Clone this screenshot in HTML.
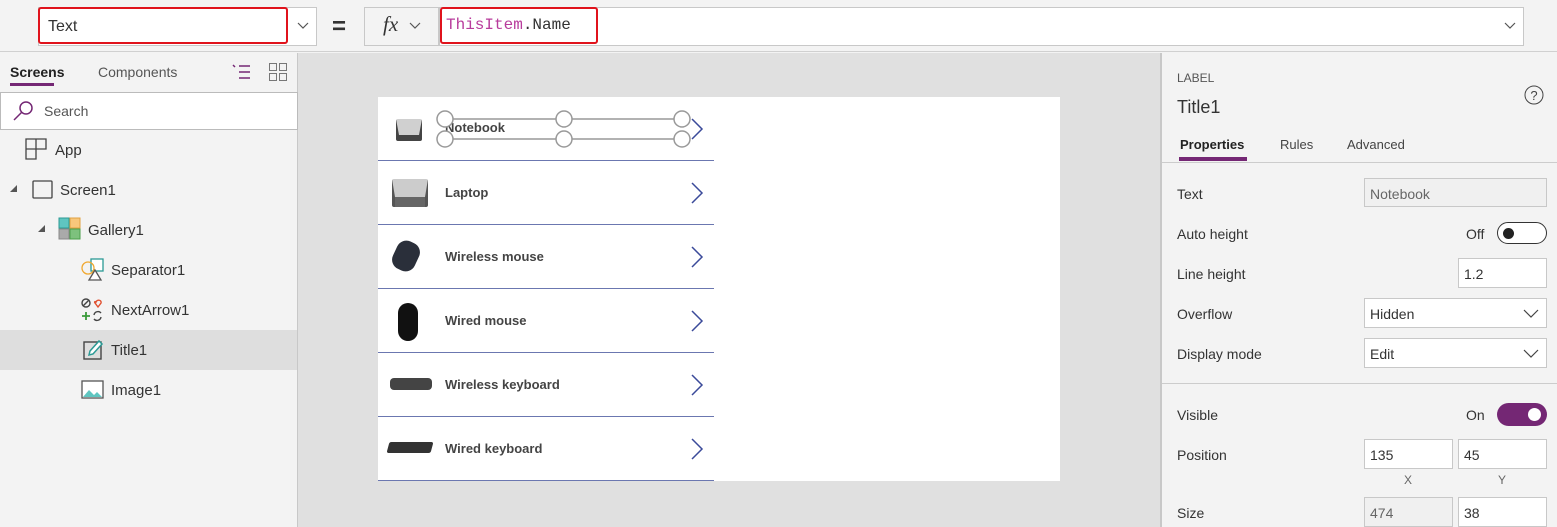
<!DOCTYPE html>
<html><head><meta charset="utf-8"><style>
*{box-sizing:border-box;margin:0;padding:0}
body{width:1557px;height:527px;overflow:hidden;background:#f3f3f3;font-family:"Liberation Sans",sans-serif;color:#333;position:relative;font-size:14px}
.a{position:absolute}
.box{position:absolute;background:#fff;border:1px solid #c8c8c8}
.t{position:absolute;font-size:14px;color:#333;white-space:nowrap}
.row{position:absolute;left:378px;width:336px;height:64px;border-bottom:1px solid #6b77b0}
.row .n{position:absolute;left:67px;top:24px;font-size:13px;font-weight:bold;color:#444}
.row svg.ch{position:absolute;left:312px;top:20px}
.img{position:absolute;left:12px;background:#333;border-radius:2px}
.tree{position:absolute;left:0;width:297px;height:40px;font-size:15px}
.tree span{position:absolute;top:11px}
</style></head><body>
<!-- top bar -->
<div class="a" style="left:0;top:0;width:1557px;height:52px;background:#f3f3f3;border-bottom:1px solid #d0d0d0"></div>
<div class="box" style="left:38px;top:7px;width:279px;height:39px"></div>
<div class="a" style="left:38px;top:7px;width:250px;height:37px;border:2px solid #e0131c;border-radius:3px;background:#fff"></div>
<div class="t" style="left:48px;top:18px;font-size:16px">Text</div>
<svg class="a" style="left:296px;top:21px" width="14" height="10"><path d="M2 2l5 5 5-5" fill="none" stroke="#555" stroke-width="1.2"/></svg>
<div class="t" style="left:332px;top:13px;font-size:24px;font-weight:bold">=</div>
<div class="box" style="left:364px;top:7px;width:75px;height:39px;background:#f3f3f3"></div>
<div class="t" style="left:383px;top:12px;font-family:'Liberation Serif',serif;font-style:italic;font-size:21px">fx</div>
<svg class="a" style="left:408px;top:21px" width="14" height="10"><path d="M2 2l5 5 5-5" fill="none" stroke="#555" stroke-width="1.2"/></svg>
<div class="box" style="left:439px;top:7px;width:1085px;height:39px"></div>
<div class="a" style="left:440px;top:7px;width:158px;height:37px;border:2px solid #e0131c;border-radius:3px;background:#fff"></div>
<div class="t" style="left:446px;top:16px;font-family:'Liberation Mono',monospace;font-size:16px"><span style="color:#b83c9c">ThisItem</span>.Name</div>
<svg class="a" style="left:1503px;top:21px" width="14" height="10"><path d="M2 2l5 5 5-5" fill="none" stroke="#555" stroke-width="1.2"/></svg>

<!-- left panel -->
<div class="a" style="left:0;top:53px;width:298px;height:474px;border-right:1px solid #c8c8c8"></div>
<div class="t" style="left:10px;top:64px;font-weight:bold;font-size:14px;color:#222">Screens</div>
<div class="a" style="left:10px;top:83px;width:44px;height:3px;background:#742774"></div>
<div class="t" style="left:98px;top:64px;color:#555">Components</div>
<svg class="a" style="left:230px;top:62px" width="22" height="20"><path d="M3 3l2 2M9 4h11M9 10h11M9 16h11" stroke="#742774" stroke-width="1.5" fill="none"/></svg>
<svg class="a" style="left:268px;top:62px" width="20" height="20"><g fill="none" stroke="#777"><rect x="1.5" y="1.5" width="7" height="7"/><rect x="11.5" y="1.5" width="7" height="7"/><rect x="1.5" y="11.5" width="7" height="7"/><rect x="11.5" y="11.5" width="7" height="7"/></g></svg>
<div class="box" style="left:0;top:92px;width:298px;height:38px;border-color:#bbb"></div>
<svg class="a" style="left:11px;top:99px" width="26" height="24"><circle cx="15" cy="9" r="6" fill="none" stroke="#742774" stroke-width="1.5"/><path d="M11 13l-8 8" stroke="#742774" stroke-width="1.5"/></svg>
<div class="t" style="left:44px;top:103px;color:#555">Search</div>

<div class="tree" style="top:130px"><svg class="a" style="left:25px;top:8px" width="24" height="24"><path d="M1 1h10v10H1zM11 1h10v10H11M1 11v10h10V11" fill="none" stroke="#444" stroke-width="1.3"/></svg><span style="left:55px;top:12px">App</span></div>
<div class="tree" style="top:170px"><svg class="a" style="left:10px;top:15px" width="8" height="8"><path d="M7 0v7H0z" fill="#555"/></svg><svg class="a" style="left:32px;top:10px" width="22" height="20"><rect x="1" y="1" width="19" height="17" rx="1" fill="none" stroke="#444" stroke-width="1.3"/></svg><span style="left:60px;top:12px">Screen1</span></div>
<div class="tree" style="top:210px"><svg class="a" style="left:38px;top:15px" width="8" height="8"><path d="M7 0v7H0z" fill="#555"/></svg><svg class="a" style="left:58px;top:7px" width="24" height="24"><rect x="1" y="1" width="10" height="10" fill="#5fc5c0" stroke="#2b9a95"/><rect x="12" y="1" width="10" height="10" fill="#f8c77b" stroke="#e0a040"/><rect x="1" y="12" width="10" height="10" fill="#aaa" stroke="#888"/><rect x="12" y="12" width="10" height="10" fill="#7dc17d" stroke="#4a9f4a"/></svg><span style="left:88px;top:12px">Gallery1</span></div>
<div class="tree" style="top:250px"><svg class="a" style="left:81px;top:8px" width="24" height="24"><rect x="10" y="1" width="12" height="12" fill="#fff" stroke="#2b9a95" stroke-width="1.3"/><circle cx="7" cy="10" r="6" fill="none" stroke="#f0a830" stroke-width="1.3"/><path d="M8 22l6-10 6 10z" fill="#fff" stroke="#555" stroke-width="1.3"/></svg><span style="left:111px;top:12px">Separator1</span></div>
<div class="tree" style="top:290px"><svg class="a" style="left:81px;top:8px" width="24" height="24"><circle cx="5" cy="5" r="4" fill="none" stroke="#444" stroke-width="1.4"/><path d="M2 8l6-6" stroke="#444" stroke-width="1.4"/><path d="M15 4c1-3 6-2 5 1l-3 4-3-4c-1-1 0-2 1-1z" fill="none" stroke="#e05030" stroke-width="1.4"/><path d="M1 18h8M5 14v8" stroke="#3a9a3a" stroke-width="1.8"/><path d="M13 17a4 4 0 0 1 7-2M20 19a4 4 0 0 1-7 2" fill="none" stroke="#444" stroke-width="1.4"/></svg><span style="left:111px;top:12px">NextArrow1</span></div>
<div class="tree" style="top:330px;background:#dedede"><svg class="a" style="left:83px;top:8px" width="22" height="24"><rect x="1" y="4" width="17" height="17" fill="none" stroke="#444" stroke-width="1.4"/><path d="M6 17l1-4 9-10 3 3-9 10z" fill="#fff" stroke="#2b9a95" stroke-width="1.5"/></svg><span style="left:111px;top:12px">Title1</span></div>
<div class="tree" style="top:370px"><svg class="a" style="left:81px;top:10px" width="24" height="20"><rect x="1" y="1" width="21" height="17" fill="#fff" stroke="#555" stroke-width="1.3"/><path d="M2 17l6-7 5 5 3-3 5 5z" fill="#5fc5c0"/></svg><span style="left:111px;top:12px">Image1</span></div>

<!-- canvas -->
<div class="a" style="left:298px;top:53px;width:862px;height:474px;background:#e0e0e0"></div>
<div class="a" style="left:378px;top:97px;width:682px;height:384px;background:#fff"></div>
<div class="row" style="top:97px"><div class="img" style="left:18px;top:22px;width:26px;height:22px;background:#444;border-top:16px solid #d0d0d0;border-left:3px solid #444;border-right:3px solid #444"></div><div class="n" style="top:23px">Notebook</div><svg class="ch" width="14" height="24"><path d="M2 2l10 10-10 10" fill="none" stroke="#3b4a9a" stroke-width="1.5"/></svg></div>
<div class="row" style="top:161px"><div class="img" style="left:14px;top:18px;width:36px;height:28px;background:#666;border-top:18px solid #ccc;border-left:3px solid #555;border-right:3px solid #555"></div><div class="n">Laptop</div><svg class="ch" width="14" height="24"><path d="M2 2l10 10-10 10" fill="none" stroke="#3b4a9a" stroke-width="1.5"/></svg></div>
<div class="row" style="top:225px"><div class="img" style="left:16px;top:16px;width:24px;height:30px;border-radius:10px;transform:rotate(25deg);background:#2a2f3a"></div><div class="n">Wireless mouse</div><svg class="ch" width="14" height="24"><path d="M2 2l10 10-10 10" fill="none" stroke="#3b4a9a" stroke-width="1.5"/></svg></div>
<div class="row" style="top:289px"><div class="img" style="left:20px;top:14px;width:20px;height:38px;border-radius:10px;background:#111"></div><div class="n">Wired mouse</div><svg class="ch" width="14" height="24"><path d="M2 2l10 10-10 10" fill="none" stroke="#3b4a9a" stroke-width="1.5"/></svg></div>
<div class="row" style="top:353px"><div class="img" style="top:25px;width:42px;height:12px;border-radius:4px;background:#444"></div><div class="n">Wireless keyboard</div><svg class="ch" width="14" height="24"><path d="M2 2l10 10-10 10" fill="none" stroke="#3b4a9a" stroke-width="1.5"/></svg></div>
<div class="row" style="top:417px"><div class="img" style="left:10px;top:25px;width:44px;height:11px;background:#333;transform:skewX(-15deg)"></div><div class="n">Wired keyboard</div><svg class="ch" width="14" height="24"><path d="M2 2l10 10-10 10" fill="none" stroke="#3b4a9a" stroke-width="1.5"/></svg></div>
<!-- selection handles -->
<svg class="a" style="left:434px;top:108px" width="260" height="40"><g stroke="#999" stroke-width="1.5" fill="#fff"><path d="M12 11h236M12 31h236"/><circle cx="11" cy="11" r="8"/><circle cx="130" cy="11" r="8"/><circle cx="248" cy="11" r="8"/><circle cx="11" cy="31" r="8"/><circle cx="130" cy="31" r="8"/><circle cx="248" cy="31" r="8"/></g></svg>

<!-- right panel -->
<div class="a" style="left:1160px;top:53px;width:397px;height:474px;border-left:2px solid #c8c8c8"></div>
<div class="t" style="left:1177px;top:71px;font-size:12px;color:#555">LABEL</div>
<div class="t" style="left:1177px;top:97px;font-size:18px">Title1</div>
<svg class="a" style="left:1523px;top:84px" width="22" height="22"><circle cx="11" cy="11" r="9" fill="none" stroke="#444"/><text x="11" y="16" font-size="13" text-anchor="middle" fill="#444" font-family="Liberation Sans">?</text></svg>
<div class="t" style="left:1180px;top:137px;font-size:13px;font-weight:bold;color:#222">Properties</div>
<div class="a" style="left:1179px;top:157px;width:68px;height:4px;background:#742774"></div>
<div class="t" style="left:1280px;top:137px;font-size:13px;color:#444">Rules</div>
<div class="t" style="left:1347px;top:137px;font-size:13px;color:#444">Advanced</div>
<div class="a" style="left:1162px;top:162px;width:395px;height:1px;background:#ccc"></div>

<div class="t" style="left:1177px;top:186px">Text</div>
<div class="box" style="left:1364px;top:178px;width:183px;height:29px;background:#f0f0f0;border-color:#c8c8c8"></div>
<div class="t" style="left:1370px;top:186px;color:#666">Notebook</div>
<div class="t" style="left:1177px;top:226px">Auto height</div>
<div class="t" style="left:1466px;top:226px">Off</div>
<div class="a" style="left:1497px;top:222px;width:50px;height:22px;border:1.5px solid #333;border-radius:11px;background:#fff"></div>
<div class="a" style="left:1503px;top:228px;width:11px;height:11px;border-radius:50%;background:#222"></div>
<div class="t" style="left:1177px;top:266px">Line height</div>
<div class="box" style="left:1458px;top:258px;width:89px;height:30px"></div>
<div class="t" style="left:1464px;top:266px">1.2</div>
<div class="t" style="left:1177px;top:306px">Overflow</div>
<div class="box" style="left:1364px;top:298px;width:183px;height:30px"></div>
<div class="t" style="left:1370px;top:306px">Hidden</div>
<svg class="a" style="left:1522px;top:308px" width="18" height="12"><path d="M2 2l7 7 7-7" fill="none" stroke="#444" stroke-width="1.2"/></svg>
<div class="t" style="left:1177px;top:346px">Display mode</div>
<div class="box" style="left:1364px;top:338px;width:183px;height:30px"></div>
<div class="t" style="left:1370px;top:346px">Edit</div>
<svg class="a" style="left:1522px;top:348px" width="18" height="12"><path d="M2 2l7 7 7-7" fill="none" stroke="#444" stroke-width="1.2"/></svg>
<div class="a" style="left:1162px;top:383px;width:395px;height:1px;background:#ccc"></div>

<div class="t" style="left:1177px;top:407px">Visible</div>
<div class="t" style="left:1466px;top:407px">On</div>
<div class="a" style="left:1497px;top:403px;width:50px;height:23px;border-radius:12px;background:#742774"></div>
<div class="a" style="left:1528px;top:408px;width:13px;height:13px;border-radius:50%;background:#fff"></div>
<div class="t" style="left:1177px;top:447px">Position</div>
<div class="box" style="left:1364px;top:439px;width:89px;height:30px"></div>
<div class="t" style="left:1370px;top:447px">135</div>
<div class="box" style="left:1458px;top:439px;width:89px;height:30px"></div>
<div class="t" style="left:1464px;top:447px">45</div>
<div class="t" style="left:1404px;top:473px;font-size:12px;color:#666">X</div>
<div class="t" style="left:1498px;top:473px;font-size:12px;color:#666">Y</div>
<div class="t" style="left:1177px;top:505px">Size</div>
<div class="box" style="left:1364px;top:497px;width:89px;height:30px;background:#f0f0f0"></div>
<div class="t" style="left:1370px;top:505px;color:#666">474</div>
<div class="box" style="left:1458px;top:497px;width:89px;height:30px"></div>
<div class="t" style="left:1464px;top:505px">38</div>
</body></html>
